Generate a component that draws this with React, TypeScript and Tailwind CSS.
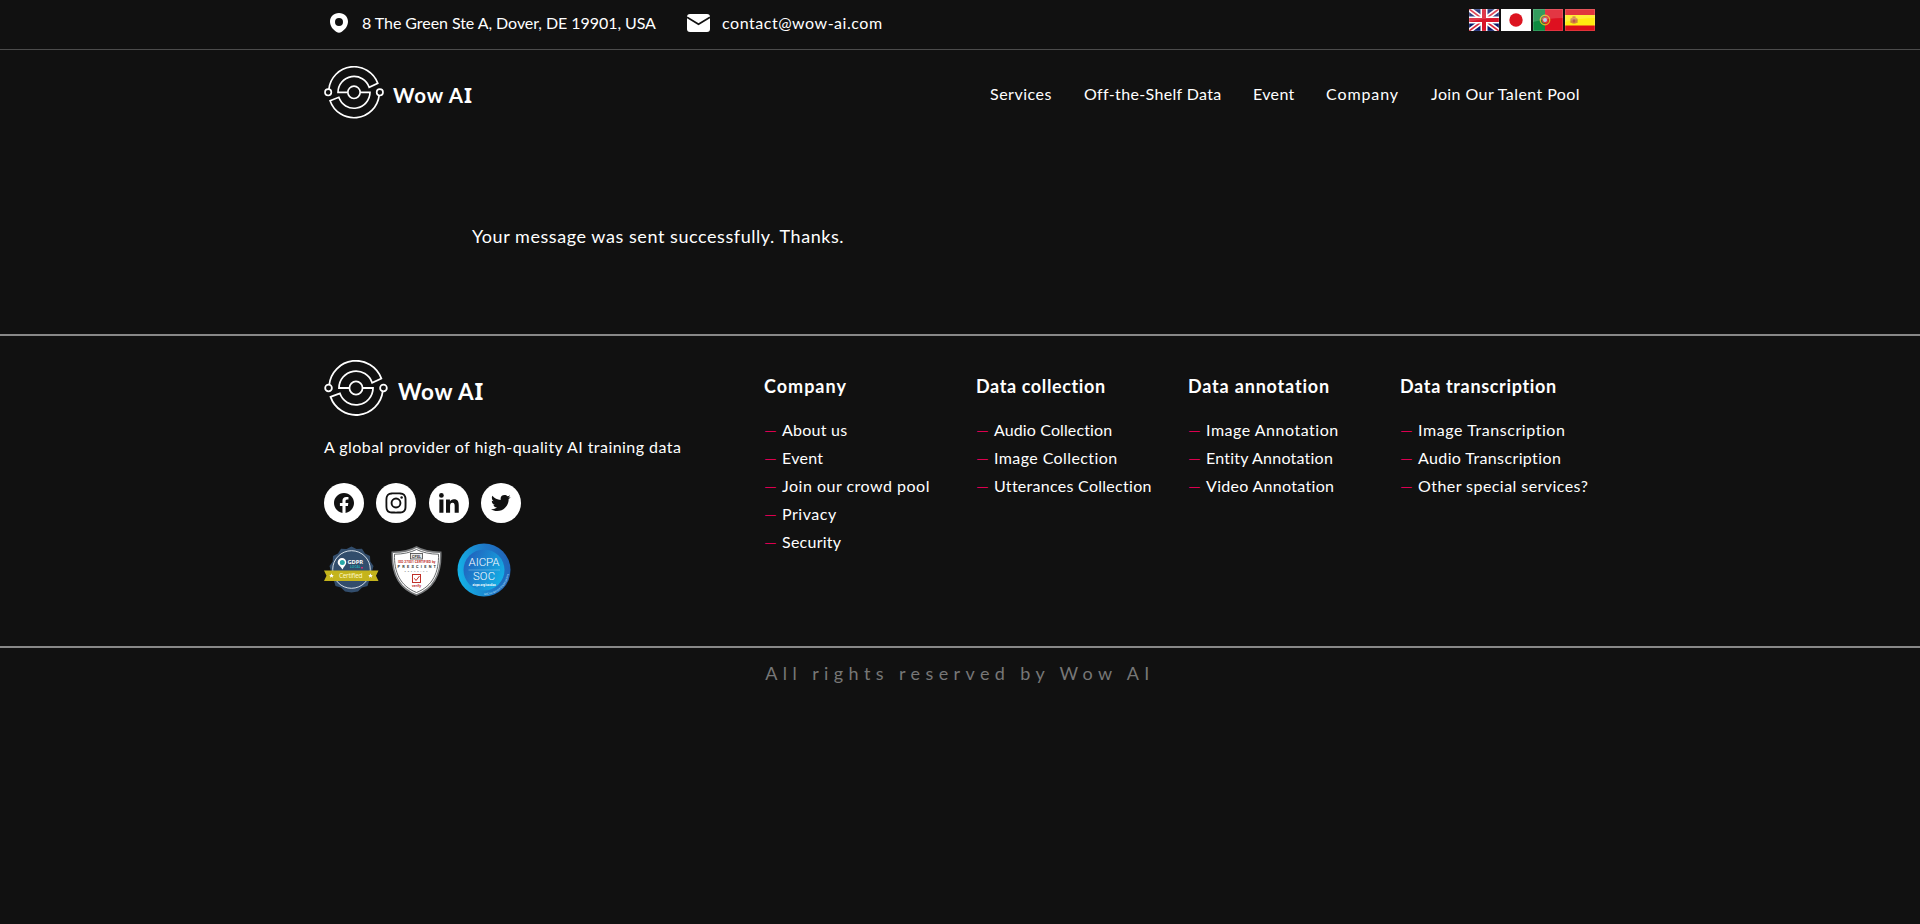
import type { ReactNode } from "react";
import {
  BiLogoFacebookCircle,
  BiLogoInstagram,
  BiLogoLinkedin,
  BiLogoTwitter,
} from "react-icons/bi";

type Item = { label: string; cls: string };

const nav: Item[] = [
  { label: "Services", cls: "w-[94px] tracking-[0.5px]" },
  { label: "Off-the-Shelf Data", cls: "w-[169px] tracking-[0.35px]" },
  { label: "Event", cls: "w-[73px] tracking-[0.35px]" },
  { label: "Company", cls: "w-[105px] tracking-[0.9px]" },
  { label: "Join Our Talent Pool", cls: "w-[150px] tracking-[0.41px]" },
];

const columns: { title: Item; links: Item[] }[] = [
  {
    title: { label: "Company", cls: "tracking-[1px]" },
    links: [
      { label: "About us", cls: "tracking-[0.24px]" },
      { label: "Event", cls: "tracking-[0.3px]" },
      { label: "Join our crowd pool", cls: "tracking-[0.5px]" },
      { label: "Privacy", cls: "tracking-[0.54px]" },
      { label: "Security", cls: "tracking-[0.26px]" },
    ],
  },
  {
    title: { label: "Data collection", cls: "tracking-[0.61px]" },
    links: [
      { label: "Audio Collection", cls: "tracking-[0.12px]" },
      { label: "Image Collection", cls: "tracking-[0.41px]" },
      { label: "Utterances Collection", cls: "tracking-[0.28px]" },
    ],
  },
  {
    title: { label: "Data annotation", cls: "tracking-[0.81px]" },
    links: [
      { label: "Image Annotation", cls: "tracking-[0.52px]" },
      { label: "Entity Annotation", cls: "tracking-[0.22px]" },
      { label: "Video Annotation", cls: "tracking-[0.3px]" },
    ],
  },
  {
    title: { label: "Data transcription", cls: "tracking-[0.66px]" },
    links: [
      { label: "Image Transcription", cls: "tracking-[0.57px]" },
      { label: "Audio Transcription", cls: "tracking-[0.38px]" },
      { label: "Other special services?", cls: "tracking-[0.44px]" },
    ],
  },
];

function LogoMark({ className }: { className: string }) {
  return (
    <svg viewBox="0 0 180 158" className={className} fill="none" stroke="#fff" strokeWidth="5">
      <path d="M14.500 70A76 76 0 0 1 161.400 52L135.500 64A48 48 0 0 0 42 79H71" />
      <path d="M109 79H138A48 48 0 0 1 44.500 94L18.200 104A76 76 0 0 0 165.500 88" />
      <circle cx="90" cy="79" r="18.500" />
      <circle cx="12.500" cy="79" r="9.500" />
      <circle cx="167.500" cy="79" r="9.500" />
    </svg>
  );
}

function PinIcon() {
  return (
    <svg viewBox="0 0 18 20" className="h-5 w-[18px]">
      <path
        fill="#fff"
        fillRule="evenodd"
        d="M9 0C3.600 0 0 3.700 0 8.600c0 4.300 2.700 7.900 6.600 10.500 1.500 1 3.300 1 4.800 0C15.300 16.500 18 12.900 18 8.600 18 3.700 14.400 0 9 0zm0 5a4 4 0 1 1 0 8 4 4 0 0 1 0-8z"
      />
    </svg>
  );
}

function MailIcon() {
  return (
    <svg viewBox="0 0 23 18" className="h-[18px] w-[23px]">
      <rect width="23" height="18" rx="3" fill="#fff" />
      <path d="M0 3.200 11.500 10.300 23 3.200" fill="none" stroke="#111" strokeWidth="1.800" />
    </svg>
  );
}

function Flag({ children }: { children: ReactNode }) {
  return (
    <svg viewBox="0 0 30 22" className="h-[22px] w-[30px]">
      {children}
      <rect x="0.5" y="0.5" width="29" height="21" fill="none" stroke="#fff" strokeOpacity="0.15" />
      <path d="M0 0H30V9Q15 9 0 13Z" fill="#fff" fillOpacity="0.16" />
    </svg>
  );
}

function Flags() {
  return (
    <div className="flex gap-0.5 pt-[9px]">
      <Flag>
        <rect width="30" height="22" fill="#0a1a6b" />
        <path d="M0 0 30 22M30 0 0 22" stroke="#fff" strokeWidth="5" />
        <path d="M0 0 30 22M30 0 0 22" stroke="#d8283c" strokeWidth="1.800" />
        <path d="M15 0V22M0 11H30" stroke="#fff" strokeWidth="7" />
        <path d="M15 0V22M0 11H30" stroke="#d8142a" strokeWidth="4" />
      </Flag>
      <svg viewBox="0 0 30 22" className="h-[22px] w-[30px]">
        <rect width="30" height="22" fill="#fff" />
        <circle cx="15" cy="11" r="6.700" fill="#dc1420" />
      </svg>
      <Flag>
        <rect width="30" height="22" fill="#de1020" />
        <rect width="12" height="22" fill="#0c8a40" />
        <circle cx="12" cy="11" r="4.700" fill="none" stroke="#d8b020" strokeWidth="1.400" />
        <circle cx="12" cy="11" r="3.200" fill="#dc4038" />
        <circle cx="12" cy="11" r="2" fill="#b8cdf0" />
      </Flag>
      <Flag>
        <rect width="30" height="22" fill="#dc1018" />
        <rect y="6" width="30" height="10.500" fill="#ffec10" />
        <circle cx="9" cy="11.500" r="3.300" fill="#d88a40" />
        <path d="M6 9.500V14M12 9.500V14" stroke="#c07840" strokeWidth="0.900" />
        <path d="M7.700 10H10.300V13.500H7.700Z" fill="#c05848" />
        <path d="M7.500 8H10.500" stroke="#c05030" />
      </Flag>
    </div>
  );
}

function GdprBadge() {
  return (
    <svg viewBox="0 0 55 47" className="mt-[3px] h-[47px] w-[55px]">
      <path
        d="M27.500 0.500 32.500 3 38 2.800 41 7.500 46 10 46.300 15.500 49.500 20 48 25.500 49 31 45 35 43.500 40 38 41.500 34 45.500 27.500 46.500 21 45.500 17 41.500 11.500 40 10 35 6 31 7 25.500 5.500 20 8.700 15.500 9 10 14 7.500 17 2.800 22.500 3Z"
        fill="#324d6c"
      />
      <circle cx="27.500" cy="23.500" r="18.800" fill="none" stroke="#e8eef4" strokeWidth="0.900" />
      <path d="M18 12a4.300 4.300 0 0 1 4.300 4.300c0 2.800-2.300 4-3.800 7.200-1.600-3-4.800-4.400-4.800-7.200A4.300 4.300 0 0 1 18 12z" fill="#fff" />
      <circle cx="18.300" cy="16.500" r="2.500" fill="#28a8a8" />
      <text x="23.500" y="18" fontSize="5.800" fontWeight="700" fill="#fff" textLength="15.500" fontFamily="Open Sans, sans-serif">GDPR</text>
      <text x="26" y="22.300" fontSize="3.200" fontWeight="700" fill="#20a8b0" textLength="10.500" fontFamily="Open Sans, sans-serif">LOCAL</text>
      <rect x="37" y="21" width="2" height="1.500" fill="#d03070" />
      <path d="M0 24.500H54.500L52 29.700 54.500 35H0L2.500 29.700Z" fill="#c4b41c" />
      <text x="15" y="32.300" fontSize="6.500" fill="#fff8c8" textLength="23.500" fontFamily="Open Sans, sans-serif">Certified</text>
      <path
        d="M7.500 27.300l.7 1.600 1.700.1-1.300 1.100.5 1.700-1.600-1-1.600 1 .5-1.700-1.300-1.100 1.700-.1zM46.500 27.300l.7 1.600 1.700.1-1.300 1.100.5 1.700-1.600-1-1.600 1 .5-1.700-1.300-1.100 1.700-.1z"
        fill="#fff"
      />
    </svg>
  );
}

function ShieldBadge() {
  return (
    <svg viewBox="0 0 51 50" className="mt-[3px] ml-3 h-[50px] w-[51px]">
      <path
        d="M25.500 1C31.500 4.500 40 6.300 49.700 6.200 50.500 27 44 42 25.500 49 7 42 0.500 27 1.300 6.200 11 6.300 19.500 4.500 25.500 1Z"
        fill="#fff"
        stroke="#77797b"
        strokeWidth="1.600"
      />
      <path
        d="M25.500 3.500C31.500 6.500 39 8.200 47.500 8.200 48 26 42 40 25.500 46.500 9 40 3 26 3.500 8.200 12 8.200 19.500 6.500 25.500 3.500Z"
        fill="#fff"
        stroke="#55585a"
        strokeWidth="0.900"
      />
      <rect x="19.500" y="7.500" width="12" height="5.500" fill="#e8e8e8" stroke="#444" strokeWidth="0.800" />
      <text x="21" y="11.600" fontSize="3.600" fontWeight="700" fill="#333" textLength="9" fontFamily="Roboto, sans-serif">CPSL</text>
      <text x="7" y="17.300" fontSize="3.400" fontWeight="700" fill="#c0392b" textLength="37.500" fontFamily="Roboto, sans-serif">ISO 27001 CERTIFIED by</text>
      <text x="6.500" y="22.200" fontSize="3.900" fontWeight="700" fill="#333" textLength="38.500" fontFamily="Roboto, sans-serif">PRESCIENT</text>
      <text x="13.500" y="25.700" fontSize="2.200" fill="#555" textLength="23" fontFamily="Roboto, sans-serif">SECURITY</text>
      <rect x="21.500" y="28.500" width="8" height="8" fill="#fff" stroke="#c03028" strokeWidth="1" />
      <path d="M23.300 32.300 25 34.500 28.500 30" fill="none" stroke="#c03028" strokeWidth="1" />
      <text x="21" y="41.300" fontSize="3.600" fontWeight="700" fill="#c03028" textLength="9" fontFamily="Roboto, sans-serif">verify</text>
    </svg>
  );
}

function SocBadge() {
  return (
    <svg viewBox="0 0 54 54" className="ml-[15px] size-[54px]">
      <defs>
        <linearGradient id="socOuter" x1="0" y1="0.6" x2="1" y2="0.4">
          <stop offset="0" stopColor="#14b4e8" />
          <stop offset="0.6" stopColor="#1e78c8" />
          <stop offset="1" stopColor="#2064b8" />
        </linearGradient>
        <linearGradient id="socInner" x1="1" y1="0.8" x2="0.1" y2="0.3">
          <stop offset="0" stopColor="#12b4e8" />
          <stop offset="1" stopColor="#2068c0" />
        </linearGradient>
        <path id="socArc" d="M27 52A25 25 0 0 0 52 27" />
      </defs>
      <circle cx="27" cy="27" r="26.500" fill="url(#socOuter)" />
      <circle cx="27" cy="27" r="20.500" fill="url(#socInner)" />
      <text x="11.500" y="23.300" fontSize="11.500" fill="#fff" fontWeight="300" textLength="31" fontFamily="Roboto, sans-serif">AICPA</text>
      <path d="M11.500 27H43" stroke="#8fc8ec" strokeWidth="0.500" />
      <text x="16" y="37" fontSize="11.300" fill="#fff" fontWeight="300" textLength="22" fontFamily="Roboto, sans-serif">SOC</text>
      <text x="15.500" y="42.500" fontSize="2.800" fill="#fff" fontWeight="700" textLength="23" fontFamily="Roboto, sans-serif">aicpa.org/soc4so</text>
      <text fontSize="2.600" fill="#c8e8fa" fontFamily="Roboto, sans-serif">
        <textPath href="#socArc">SOC for Service Organizations</textPath>
      </text>
    </svg>
  );
}

function Social({ children, className = "" }: { children: ReactNode; className?: string }) {
  return (
    <a className={`flex size-10 items-center justify-center rounded-full bg-white text-2xl text-[#111] ${className}`}>
      {children}
    </a>
  );
}

export default function App() {
  return (
    <div className="min-h-screen bg-[#111] font-['Lato','Liberation_Sans',sans-serif] text-base leading-6 text-white">
      <div className="h-[50px] border-b border-[#4c4c4c]">
        <div className="mx-auto flex w-[1272px] items-start justify-between">
          <div className="flex items-start">
            <div className="flex items-start pl-1.5">
              <div className="pt-[13px]"><PinIcon /></div>
              <span className="w-[325px] pt-[11px] pl-3.5 tracking-[-0.06px]">8 The Green Ste A, Dover, DE 19901, USA</span>
            </div>
            <div className="flex items-start pl-3.5">
              <div className="pt-3.5"><MailIcon /></div>
              <span className="pt-[11px] pl-3 tracking-[0.53px]">contact@wow-ai.com</span>
            </div>
          </div>
          <div className="mr-[1px]"><Flags /></div>
        </div>
      </div>

      <header className="mx-auto flex h-[86px] w-[1272px] items-start justify-between">
        <div className="flex items-start pt-4">
          <LogoMark className="h-[52.700px] w-[60px]" />
          <span className="flex items-baseline pt-[15px] pl-[9px] text-[20.500px] leading-[28px] font-bold tracking-[0.9px]">
            <span className="whitespace-pre">Wow A</span>
            <span className="font-['Noto_Sans',sans-serif]">I</span>
          </span>
        </div>
        <nav className="mr-[15px] flex pt-8">
          {nav.map((n) => (
            <a key={n.label} className={`whitespace-nowrap ${n.cls}`}>{n.label}</a>
          ))}
        </nav>
      </header>

      <main className="mx-auto h-[198px] w-[1272px] pt-[86px] pl-[148px]">
        <p className="text-lg leading-7 tracking-[0.56px]">Your message was sent successfully. Thanks.</p>
      </main>

      <footer>
        <div className="h-[314px] border-y-2 border-[#888]">
          <div className="mx-auto flex w-[1272px] pt-6">
            <div className="w-[440px]">
              <div className="flex h-[57px] items-start">
                <LogoMark className="h-[56px] w-[64px]" />
                <span className="flex items-baseline pt-[18px] pl-2.5 text-[22.500px] leading-[28px] font-bold tracking-[0.7px]">
                  <span className="whitespace-pre">Wow A</span>
                  <span className="font-['Noto_Sans',sans-serif]">I</span>
                </span>
              </div>
              <p className="pt-[18px] tracking-[0.45px]">A global provider of high-quality AI training data</p>
              <div className="mt-6 flex">
                <Social><BiLogoFacebookCircle /></Social>
                <Social className="ml-3"><BiLogoInstagram className="size-7" /></Social>
                <Social className="ml-[13px]"><BiLogoLinkedin className="size-[26px]" /></Social>
                <Social className="ml-3"><BiLogoTwitter /></Social>
              </div>
              <div className="mt-5 flex items-start">
                <GdprBadge />
                <ShieldBadge />
                <SocBadge />
              </div>
            </div>
            <div className="grid grid-cols-[212px_212px_212px_196px] pt-3">
              {columns.map((c) => (
                <div key={c.title.label}>
                  <h4 className={`text-lg leading-7 font-bold ${c.title.cls}`}>{c.title.label}</h4>
                  <ul className="pt-[18px]">
                    {c.links.map((l) => (
                      <li key={l.label} className="flex h-7 whitespace-nowrap">
                        <span className="w-[18px] text-[#dc0050]">—</span>
                        <a className={l.cls}>{l.label}</a>
                      </li>
                    ))}
                  </ul>
                </div>
              ))}
            </div>
          </div>
        </div>
        <p className="pt-[11px] text-center text-lg leading-7 tracking-[5.400px] text-[#777]">All rights reserved by Wow AI</p>
      </footer>
    </div>
  );
}
